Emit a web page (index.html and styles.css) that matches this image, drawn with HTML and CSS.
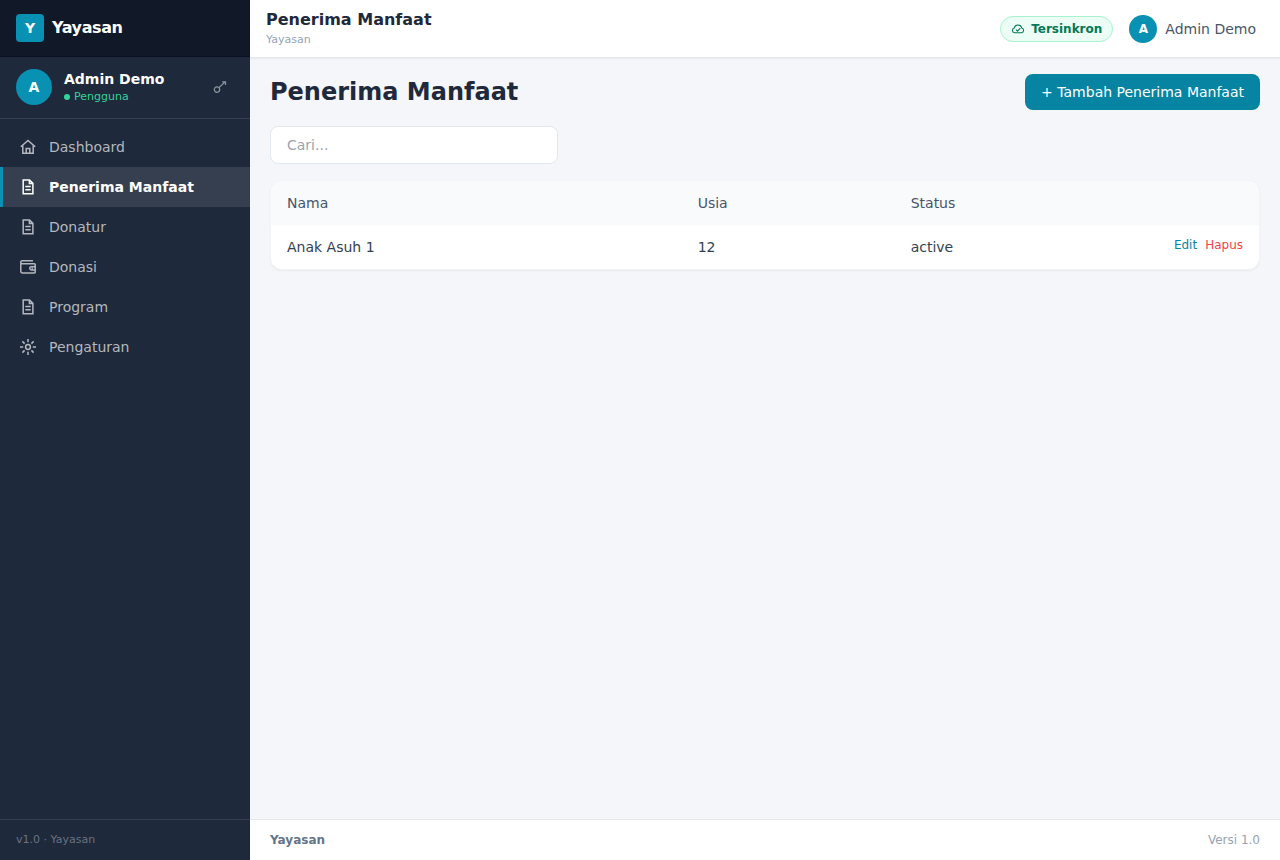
FILE: index.html
```
<!DOCTYPE html>
<html lang="id">
<head>
  <meta charset="UTF-8" />
  <meta name="viewport" content="width=device-width, initial-scale=1.0"/>
  <title>Penerima Manfaat – Yayasan</title>
  <link rel="stylesheet" href="styles.css">
</head>
<body>
  <!-- shared icon shapes -->
  <svg class="sprite" aria-hidden="true">
    <symbol id="icon-home" viewBox="0 0 18 18">
      <path d="M1.8 8.8 9 2.5l7.2 6.3M3.8 7.4v7.8h10.4V7.4M7.2 15.2v-4.6h3.6v4.6" />
    </symbol>
    <symbol id="icon-file" viewBox="0 0 18 18">
      <path d="M4.2 2h6.3l3.4 3.4v10.4H4.2zM10.4 2v3.5h3.5M6.3 8.5h5.4M6.3 11.7h5.4" />
    </symbol>
    <symbol id="icon-wallet" viewBox="0 0 18 18">
      <path d="M14 2.7H3.2a1.4 1.4 0 0 0-1.4 1.4v9.5a1.4 1.4 0 0 0 1.4 1.4h12.2a.8.8 0 0 0 .8-.8V6.5a.8.8 0 0 0-.8-.8H1.8M16.2 8.7h-3.8a1.6 1.6 0 0 0 0 3.3h3.8M12.6 10.4h1.2" />
    </symbol>
    <symbol id="icon-gear" viewBox="0 0 18 18">
      <circle cx="9" cy="9" r="2.4" />
      <path d="M9 1v3.2M9 13.8V17M1 9h3.2M13.8 9H17M3.4 3.4l2.2 2.2M12.4 12.4l2.2 2.2M14.6 3.4l-2.2 2.2M5.6 12.4l-2.2 2.2" />
    </symbol>
  </svg>

  <aside class="sidebar">
    <div class="brand">
      <span class="brand-logo">Y</span>
      <span class="brand-name">Yayasan</span>
    </div>

    <div class="user-panel">
      <span class="avatar">A</span>
      <div class="user-info">
        <strong>Admin Demo</strong>
        <span class="role">Pengguna</span>
      </div>
      <button class="key-btn" type="button" aria-label="Ganti kata sandi">
        <svg viewBox="0 0 14 14"><circle cx="4" cy="9.6" r="2.7" /><path d="M6 7.6 12.2 1.7M9.2 1.8h3.3v3.1" /></svg>
      </button>
    </div>

    <nav class="menu">
      <a href="#"><svg><use href="#icon-home" /></svg>Dashboard</a>
      <a href="#" class="active"><svg><use href="#icon-file" /></svg>Penerima Manfaat</a>
      <a href="#"><svg><use href="#icon-file" /></svg>Donatur</a>
      <a href="#"><svg><use href="#icon-wallet" /></svg>Donasi</a>
      <a href="#"><svg><use href="#icon-file" /></svg>Program</a>
      <a href="#"><svg><use href="#icon-gear" /></svg>Pengaturan</a>
    </nav>

    <div class="sidebar-footer">v1.0 · Yayasan</div>
  </aside>

  <div class="main">
    <header class="topbar">
      <div class="topbar-left">
        <div class="topbar-title">Penerima Manfaat</div>
        <div class="topbar-sub">Yayasan</div>
      </div>
      <div class="topbar-right">
        <span class="sync">
          <svg viewBox="0 0 14 14"><path d="M3.6 10.7a2.4 2.4 0 0 1-.4-4.7A3.9 3.9 0 0 1 10.8 6a2.4 2.4 0 0 1-.4 4.7zM5 7.7l1.5 1.4 2.8-3" /></svg>
          Tersinkron
        </span>
        <div class="account">
          <span class="avatar small">A</span>
          <span>Admin Demo</span>
        </div>
      </div>
    </header>

    <main class="content">
      <div class="page-head">
        <h1>Penerima Manfaat</h1>
        <button class="add-btn" type="button">+ Tambah Penerima Manfaat</button>
      </div>

      <input class="search" type="text" placeholder="Cari..." aria-label="Cari" />

      <div class="card">
        <table>
          <thead>
            <tr>
              <th>Nama</th>
              <th>Usia</th>
              <th>Status</th>
              <th class="actions-col"></th>
            </tr>
          </thead>
          <tbody>
            <tr>
              <td>Anak Asuh 1</td>
              <td>12</td>
              <td>active</td>
              <td class="actions-col">
                <div class="actions">
                  <button class="edit" type="button">Edit</button>
                  <button class="delete" type="button">Hapus</button>
                </div>
              </td>
            </tr>
          </tbody>
        </table>
      </div>
    </main>

    <footer class="footer">
      <strong>Yayasan</strong>
      <span>Versi 1.0</span>
    </footer>
  </div>
</body>
</html>
```
FILE: styles.css
```
:root {
  --primary: #0891b2;
  --primary-dark: #0684a1;
  --sidebar: #1e293b;
  --text: #1e293b;
  --muted: #94a3b8;
  --border: #e2e8f0;
}

* {
  box-sizing: border-box;
}

body {
  margin: 0;
  font-family: "DejaVu Sans", sans-serif;
  font-size: 14px;
  line-height: 20px;
  color: var(--text);
  background: #f4f6fa;
  display: flex;
  min-height: 100vh;
}

button, input {
  font: inherit;
}

button {
  border: none;
  padding: 0;
  background: none;
  cursor: pointer;
}

svg {
  fill: none;
  stroke: currentColor;
  stroke-width: 1.5;
  flex-shrink: 0;
}

.sprite {
  display: none;
}

/* sidebar */
.sidebar {
  width: 250px;
  flex-shrink: 0;
  background: var(--sidebar);
  color: #fff;
  display: flex;
  flex-direction: column;
}

.brand {
  display: flex;
  align-items: center;
  gap: 8px;
  height: 57px;
  padding: 0 16px;
  background: #111827;
  border-bottom: 1px solid #0b1120;
}

.brand-logo {
  width: 28px;
  height: 28px;
  border-radius: 4px;
  background: var(--primary);
  font-weight: bold;
  line-height: 28px;
  text-align: center;
}

.brand-name {
  font-size: 16px;
  font-weight: bold;
  letter-spacing: -0.025em;
}

.user-panel {
  display: flex;
  align-items: center;
  gap: 12px;
  padding: 12px 16px 13px;
  border-bottom: 1px solid #353f4f;
}

.avatar {
  width: 36px;
  height: 36px;
  border-radius: 50%;
  background: var(--primary);
  color: #fff;
  font-weight: bold;
  line-height: 36px;
  text-align: center;
}

.avatar.small {
  width: 28px;
  height: 28px;
  font-size: 12px;
  line-height: 28px;
}

.user-info {
  flex: 1;
}

.user-info strong {
  display: block;
}

.role {
  display: flex;
  align-items: center;
  gap: 4px;
  font-size: 11px;
  line-height: 16px;
  color: #34d399;
}

.role::before {
  content: "";
  width: 6px;
  height: 6px;
  border-radius: 50%;
  background: #34d399;
}

.key-btn {
  padding: 7px;
  color: #8e949d;
}

.key-btn svg {
  display: block;
  width: 14px;
  height: 14px;
  stroke-width: 1.2;
}

.menu {
  flex: 1;
  padding: 8px 0;
}

.menu a {
  display: flex;
  align-items: center;
  gap: 12px;
  height: 40px;
  padding: 0 16px;
  border-left: 3px solid transparent;
  color: #b4b8be;
  text-decoration: none;
}

.menu a:hover,
.menu a.active {
  background: #353f4f;
  color: #fff;
}

.menu a.active {
  border-color: var(--primary);
  font-weight: bold;
}

.menu svg {
  width: 18px;
  height: 18px;
}

.sidebar-footer {
  padding: 12px 16px;
  border-top: 1px solid #353f4f;
  font-size: 11px;
  line-height: 16px;
  color: #6b7280;
}

/* main area */
.main {
  flex: 1;
  min-width: 0;
  display: flex;
  flex-direction: column;
}

.topbar {
  display: flex;
  align-items: center;
  justify-content: space-between;
  height: 58px;
  padding: 0 24px 0 16px;
  background: #fff;
  border-bottom: 1px solid var(--border);
  box-shadow: 0 1px 2px rgba(0, 0, 0, 0.05);
}

.topbar-left {
  padding-bottom: 2px;
}

.topbar-title {
  font-size: 16px;
  font-weight: bold;
  line-height: 24px;
}

.topbar-sub {
  font-size: 11px;
  line-height: 16px;
  color: var(--muted);
}

.topbar-right {
  display: flex;
  align-items: center;
  gap: 16px;
}

.sync {
  display: flex;
  align-items: center;
  gap: 6px;
  padding: 4px 10px;
  border: 1px solid #a7f3d0;
  border-radius: 20px;
  background: #ecfdf5;
  color: #047857;
  font-size: 12px;
  font-weight: bold;
  line-height: 16px;
}

.sync svg {
  width: 14px;
  height: 14px;
  stroke-width: 1.1;
}

.account {
  display: flex;
  align-items: center;
  gap: 8px;
  color: #475569;
}

.content {
  flex: 1;
  padding: 16px 20px;
}

.page-head {
  display: flex;
  align-items: center;
  justify-content: space-between;
  margin-bottom: 16px;
}

h1 {
  margin: 0;
  font-size: 24px;
  line-height: 32px;
}

.add-btn {
  padding: 8px 16px;
  border-radius: 8px;
  background: var(--primary-dark);
  color: #fff;
}

.search {
  display: block;
  width: 288px;
  height: 38px;
  margin-bottom: 16px;
  padding: 0 16px;
  border: 1px solid var(--border);
  border-radius: 8px;
  background: #fff;
  color: var(--text);
}

.search::placeholder {
  color: #9ca3af;
}

.card {
  background: #fff;
  border: 1px solid #f1f5f9;
  border-radius: 12px;
  box-shadow: 0 1px 2px rgba(0, 0, 0, 0.05);
  overflow: hidden;
}

table {
  width: 100%;
  border-collapse: collapse;
}

th, td {
  padding: 12px 16px;
  text-align: left;
}

th {
  background: #f8fafc;
  color: #475569;
  font-weight: normal;
}

td {
  color: #334155;
}

.actions-col {
  width: 96px;
  vertical-align: top;
}

.actions {
  display: flex;
  justify-content: flex-end;
  gap: 8px;
}

.actions button {
  font-size: 12px;
  line-height: 16px;
}

.edit {
  color: var(--primary-dark);
}

.delete {
  color: #ef4444;
}

.footer {
  display: flex;
  justify-content: space-between;
  padding: 12px 20px;
  background: #fff;
  border-top: 1px solid var(--border);
  font-size: 12px;
  line-height: 16px;
  color: var(--muted);
}

.footer strong {
  color: #64748b;
}
```
